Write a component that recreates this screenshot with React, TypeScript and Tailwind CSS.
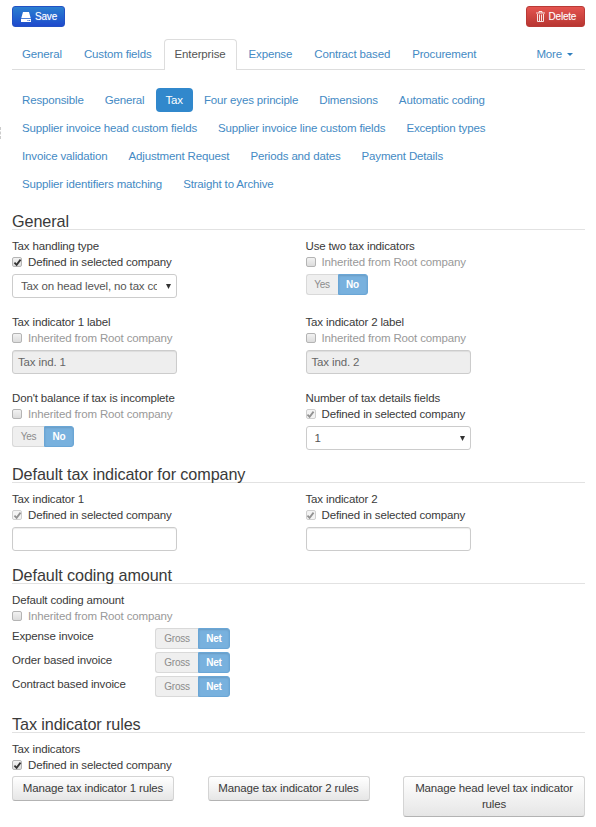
import React from "react";

const TABS = ["General", "Custom fields", "Enterprise", "Expense", "Contract based", "Procurement"];

const PILLS = [
  "Responsible",
  "General",
  "Tax",
  "Four eyes principle",
  "Dimensions",
  "Automatic coding",
  "Supplier invoice head custom fields",
  "Supplier invoice line custom fields",
  "Exception types",
  "Invoice validation",
  "Adjustment Request",
  "Periods and dates",
  "Payment Details",
  "Supplier identifiers matching",
  "Straight to Archive",
];

function Heading({ children }: { children: React.ReactNode }) {
  return (
    <h2 className="mb-2 h-[17px] border-b border-[#e2e2e2] text-[16.2px] leading-4 tracking-[-0.1px] whitespace-nowrap text-[#3a3a3a]">
      {children}
    </h2>
  );
}

function Check({ checked, muted }: { checked?: boolean; muted?: boolean }) {
  const box = muted ? "border-[#cfcfcf] bg-[#f3f3f3]" : "border-[#b4b4b4] bg-linear-to-b from-[#f2f2f2] to-[#dcdcdc]";
  return (
    <span className={`flex size-[10px] items-center justify-center rounded-[2px] border ${box}`}>
      {checked && (
        <svg viewBox="0 0 10 10" className="size-[9px] shrink-0 overflow-visible" fill="none">
          <path d="M1.6 5.2 4 7.6 8.4 1.8" stroke={muted ? "#929292" : "#333"} strokeWidth="2" />
        </svg>
      )}
    </span>
  );
}

function Field({
  label,
  defined,
  muted,
  children,
}: {
  label: string;
  defined?: boolean;
  muted?: boolean;
  children?: React.ReactNode;
}) {
  return (
    <div className="flex flex-col items-start">
      <div className="h-4">{label}</div>
      <label className="flex h-4 items-center gap-[6px]">
        <Check checked={defined} muted={muted} />
        <span className={defined ? "" : "text-[#999]"}>
          {defined ? "Defined in selected company" : "Inherited from Root company"}
        </span>
      </label>
      {children && <div className="mt-1">{children}</div>}
    </div>
  );
}

function Toggle({ off, on }: { off: string; on: string }) {
  const wide = off === "Gross";
  return (
    <div className="flex h-[21px] text-[10px] leading-[19px] tracking-[-0.25px]">
      <span
        className={`rounded-l-[3px] border border-r-0 border-[#d9d9d9] bg-[#efefef] text-center text-[#8c8c8c] ${wide ? "w-[43px]" : "w-8"}`}
      >
        {off}
      </span>
      <span
        className={`rounded-r-[3px] border border-[#6aa6d6] bg-[#78b1de] text-center font-bold text-white shadow-[inset_0_1px_2px_rgba(0,0,0,0.12)] ${wide ? "w-8" : "w-[30px]"}`}
      >
        {on}
      </span>
    </div>
  );
}

function Select({ value }: { value: string }) {
  return (
    <div className="flex h-6 w-[165px] items-center justify-between rounded-[3px] border border-[#ccc] bg-white pr-[5px] pl-2 text-[#555]">
      <span className="w-[136px] overflow-hidden whitespace-nowrap">{value}</span>
      <svg viewBox="0 0 5 5" className="h-[5px] w-[5px]">
        <path d="M0 0h5L2.5 5z" fill="#333" />
      </svg>
    </div>
  );
}

function TextInput({ value, disabled }: { value?: string; disabled?: boolean }) {
  return (
    <div
      className={`h-6 w-[165px] rounded-[3px] border border-[#ccc] pl-[5px] leading-[23px] text-[#666] shadow-[inset_0_1px_1px_rgba(0,0,0,0.075)] ${disabled ? "bg-[#eee]" : "bg-white"}`}
    >
      {value}
    </div>
  );
}

function RuleButton({ children, className }: { children: React.ReactNode; className: string }) {
  return (
    <button
      className={`rounded-[3px] border border-[#d4d4d4] border-b-[#b3b3b3] bg-linear-to-b from-white to-[#e6e6e6] pt-[3px] pb-1 text-center leading-4 text-[#3a3a3a] ${className}`}
    >
      {children}
    </button>
  );
}

export default function App() {
  return (
    <div className="relative h-[827px] w-[596px] overflow-hidden bg-white pt-[6px] pr-[11px] pl-3 font-['Liberation_Sans',Arial,sans-serif] text-[11.5px] leading-4 tracking-[-0.15px] text-[#3a3a3a]">
      <div className="absolute top-[127px] left-0 h-3 w-px border-l border-dashed border-[#ccc]" />

      <div className="flex justify-between text-[10px] tracking-[-0.2px] text-white">
        <button className="flex h-[21px] w-[53px] items-center gap-1 rounded-[3px] border border-[#2251c4] bg-linear-to-b from-[#2c7fd0] to-[#2049cc] pl-2 [text-shadow:0_0_1px_rgba(255,255,255,0.5)]">
          <svg viewBox="0 0 10 10" className="mt-px size-[10px]" fill="#fff">
            <path d="M2 0h6l1.7 6H.3z" />
            <path d="M0 6.8h10V10H0z" />
            <path d="M6.5 8h1v1h-1zM8.2 8h1v1h-1z" fill="#2458cc" />
          </svg>
          Save
        </button>
        <button className="flex h-[21px] w-[59.5px] items-center gap-1 rounded-[3px] border border-[#b93a36] bg-linear-to-b from-[#e4544f] to-[#b83632] pl-[9px] [text-shadow:0_0_1px_rgba(255,255,255,0.3)]">
          <svg viewBox="0 0 9 11" className="h-[11px] w-[9px] shrink-0" fill="none" stroke="#fff" strokeOpacity=".85">
            <path d="M0 2h9M3 1.8V.5h3v1.3" />
            <path d="M1.5 3v7.5h6V3M3.5 3.5v6.5M5.5 3.5v6.5" />
          </svg>
          Delete
        </button>
      </div>

      <nav className="mt-3 flex h-[31px] border-b border-[#ddd] text-[#448aC4]">
        {TABS.map((tab) => (
          <a
            key={tab}
            className={
              tab === "Enterprise"
                ? "mr-[2px] h-[31px] rounded-t-[4px] border border-b-0 border-[#ddd] bg-white px-[10px] pt-[6px] text-[#555]"
                : "mr-[2px] px-[10px] pt-[7px]"
            }
          >
            {tab}
          </a>
        ))}
        <a className="ml-auto flex h-[30px] items-center gap-[5px] pr-3">
          More
          <svg viewBox="0 0 6 3" className="h-[3px] w-[6px]">
            <path d="M0 0h6L3 3z" fill="#2f7fbe" />
          </svg>
        </a>
      </nav>

      <nav className="mt-[18px] flex flex-wrap gap-x-px gap-y-1 text-[#448aC4]">
        {PILLS.map((pill, i) => (
          <a
            key={i}
            className={`h-6 px-[10px] leading-6 whitespace-nowrap ${pill === "Tax" ? "rounded-[4px] bg-[#3188cc] text-white" : ""}`}
          >
            {pill}
          </a>
        ))}
      </nav>

      <section className="mt-[17px]">
        <Heading>General</Heading>
        <div className="grid grid-cols-[293.5px_1fr] gap-y-4">
          <Field label="Tax handling type" defined>
            <Select value="Tax on head level, no tax code" />
          </Field>
          <Field label="Use two tax indicators">
            <Toggle off="Yes" on="No" />
          </Field>
          <Field label="Tax indicator 1 label">
            <TextInput value="Tax ind. 1" disabled />
          </Field>
          <Field label="Tax indicator 2 label">
            <TextInput value="Tax ind. 2" disabled />
          </Field>
          <Field label="Don't balance if tax is incomplete">
            <Toggle off="Yes" on="No" />
          </Field>
          <Field label="Number of tax details fields" defined muted>
            <Select value="1" />
          </Field>
        </div>
      </section>

      <section className="mt-4">
        <Heading>Default tax indicator for company</Heading>
        <div className="grid grid-cols-[293.5px_1fr]">
          <Field label="Tax indicator 1" defined muted>
            <TextInput />
          </Field>
          <Field label="Tax indicator 2" defined muted>
            <TextInput />
          </Field>
        </div>
      </section>

      <section className="mt-4">
        <Heading>Default coding amount</Heading>
        <Field label="Default coding amount" />
        <div className="mt-1 flex flex-col gap-[3px]">
          {["Expense invoice", "Order based invoice", "Contract based invoice"].map((name) => (
            <div key={name} className="grid grid-cols-[143px_auto] justify-start">
              <span>{name}</span>
              <Toggle off="Gross" on="Net" />
            </div>
          ))}
        </div>
      </section>

      <section className="mt-[19px]">
        <Heading>Tax indicator rules</Heading>
        <Field label="Tax indicators" defined />
        <div className="mt-[3px] flex items-start justify-between">
          <RuleButton className="w-[162px]">Manage tax indicator 1 rules</RuleButton>
          <RuleButton className="w-[162px]">Manage tax indicator 2 rules</RuleButton>
          <RuleButton className="w-[182px] px-2">Manage head level tax indicator rules</RuleButton>
        </div>
      </section>
    </div>
  );
}
